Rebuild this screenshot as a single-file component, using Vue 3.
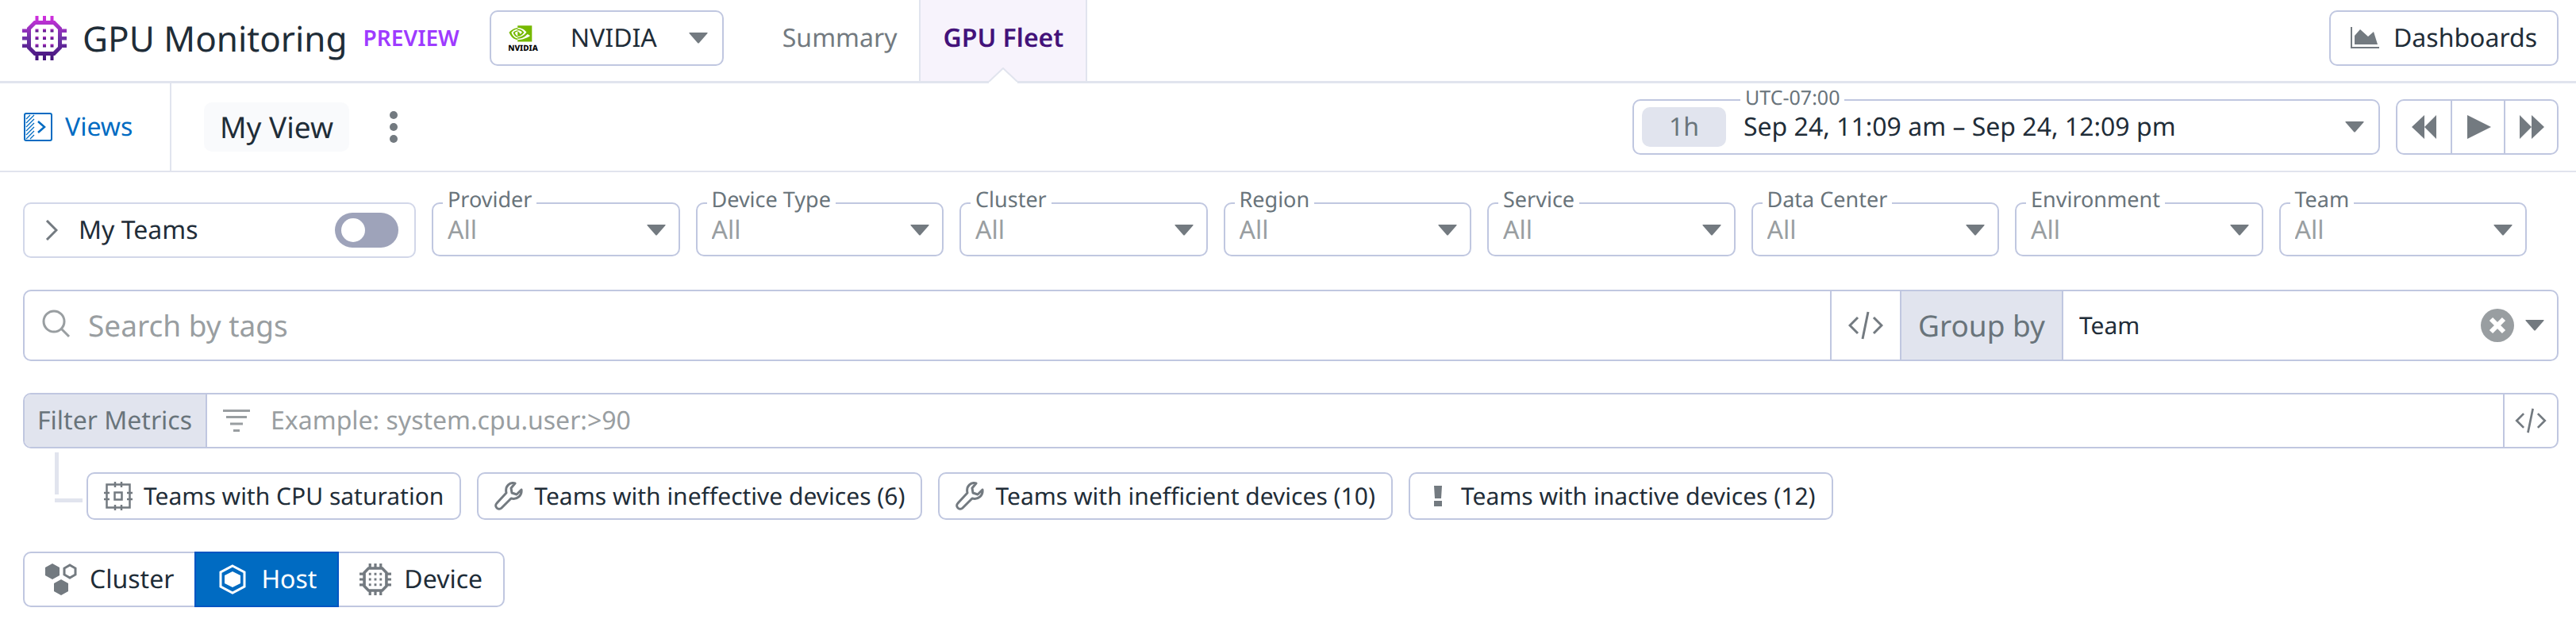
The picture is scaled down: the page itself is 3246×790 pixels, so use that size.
<script setup>
import { ref } from 'vue'

const tabs = [
  { name: 'Summary', active: false },
  { name: 'GPU Fleet', active: true },
]
const filters = ['Provider', 'Device Type', 'Cluster', 'Region', 'Service', 'Data Center', 'Environment', 'Team']
const chips = [
  { icon: 'cpu', text: 'Teams with CPU saturation' },
  { icon: 'wrench', text: 'Teams with ineffective devices (6)' },
  { icon: 'wrench', text: 'Teams with inefficient devices (10)' },
  { icon: 'alert', text: 'Teams with inactive devices (12)' },
]
const levels = ['Cluster', 'Host', 'Device']
const cores = [16.5, 26, 35.5]
const level = ref('Host')
const myTeams = ref(false)
const query = ref('')
const metricQuery = ref('')
</script>

<template>
  <div class="page">
    <svg class="defs" aria-hidden="true">
      <defs>
        <linearGradient id="brand" x1="0" y1="0" x2="0" y2="56" gradientUnits="userSpaceOnUse">
          <stop offset="0" stop-color="#d42fe0" />
          <stop offset="0.5" stop-color="#6f32a8" />
          <stop offset="1" stop-color="#43127a" />
        </linearGradient>
        <linearGradient id="core" x1="0" y1="0" x2="0" y2="1">
          <stop offset="0" stop-color="#b52fc8" />
          <stop offset="1" stop-color="#43127a" />
        </linearGradient>
        <symbol id="gpu" viewBox="0 0 56 56">
          <path d="M16 8.500H40L47.500 16V40L40 47.500H16L8.500 40V16Z" fill="none" stroke="currentColor" stroke-width="5" />
          <path d="M18.500 0V7M28 0V7M37.500 0V7M18.500 49V56M28 49V56M37.500 49V56M0 18.500H7M0 28H7M0 37.500H7M49 18.500H56M49 28H56M49 37.500H56" stroke="currentColor" stroke-width="4.500" />
          <path d="M16.500 18.500h4M26 18.500h4M35.500 18.500h4M16.500 28h4M26 28h4M35.500 28h4M16.500 37.500h4M26 37.500h4M35.500 37.500h4" stroke="currentColor" stroke-width="4" />
        </symbol>
        <symbol id="code" viewBox="0 0 44 36">
          <path d="M12 8L2 18l10 10M32 8l10 10-10 10M25 1l-7 34" fill="none" stroke="currentColor" stroke-width="3" />
        </symbol>
        <symbol id="caret" viewBox="0 0 24 14">
          <path d="M1 0H23q1 0 .5 1L13 13q-1 1-2 0L.5 1Q0 0 1 0Z" fill="currentColor" />
        </symbol>
      </defs>
    </svg>

    <header class="topbar">
      <svg class="logo" viewBox="0 0 56 56" aria-hidden="true">
        <path d="M16 8.500H40L47.500 16V40L40 47.500H16L8.500 40V16Z" fill="none" stroke="url(#brand)" stroke-width="5" />
        <path d="M16.500 0h4v7h-4zM26 0h4v7h-4zM35.500 0h4v7h-4zM16.500 49h4v7h-4zM26 49h4v7h-4zM35.500 49h4v7h-4zM0 16.500h7v4.500H0zM0 26h7v4.500H0zM0 35.500h7v4.500H0zM49 16.500h7v4.500h-7zM49 26h7v4.500h-7zM49 35.500h7v4.500h-7z" fill="url(#brand)" />
        <template v-for="y in cores" :key="y">
          <rect v-for="x in cores" :key="x" :x="x" :y="y" width="4" height="4" fill="url(#core)" />
        </template>
      </svg>
      <h1>GPU Monitoring</h1>
      <span class="preview">PREVIEW</span>
      <div class="vendor">
        <svg class="vendor-logo" viewBox="0 0 40 36" aria-hidden="true">
          <path transform="translate(2.500 -3) scale(1.200 1.280)" fill="#76b900" d="M8.948 8.798v-1.430a6.700 6.700 0 0 1 .424-.018c3.922-.124 6.493 3.374 6.493 3.374s-2.774 3.851-5.750 3.851c-.398 0-.787-.062-1.158-.185v-4.346c1.528.185 1.837.857 2.747 2.385l2.040-1.714s-1.492-1.952-4-1.952a6.016 6.016 0 0 0-.796.035m0-4.735v2.138l.424-.027c5.450-.185 9.010 4.470 9.010 4.470s-4.080 4.964-8.330 4.964c-.370 0-.733-.035-1.095-.097v1.325c.300.035.610.062.910.062 3.957 0 6.820-2.023 9.593-4.408.459.371 2.340 1.263 2.730 1.652-2.633 2.208-8.772 3.984-12.253 3.984-.335 0-.653-.018-.971-.053v1.864H24V4.063zm0 10.326v1.131c-3.657-.654-4.673-4.460-4.673-4.460s1.758-1.944 4.673-2.262v1.237H8.940c-1.528-.186-2.730 1.245-2.730 1.245s.680 2.412 2.739 3.110M2.456 10.900s2.164-3.197 6.500-3.533V6.201C4.153 6.590 0 10.653 0 10.653s2.350 6.802 8.948 7.420v-1.237c-4.840-.600-6.492-5.936-6.492-5.936z" />
          <text x="20" y="34" font-size="10" font-weight="800" text-anchor="middle">NVIDIA</text>
        </svg>
        <select aria-label="Vendor"><option>NVIDIA</option></select>
        <svg class="caret" aria-hidden="true"><use href="#caret" /></svg>
      </div>
      <nav class="tabs">
        <a v-for="t in tabs" :key="t.name" href="#" class="tab" :class="{ active: t.active }">
          {{ t.name }}
          <svg v-if="t.active" class="notch" viewBox="0 0 38 20" aria-hidden="true">
            <path d="M1 18L19 1L37 18V20H1Z" fill="#fff" />
            <path d="M1 18L19 1L37 18" fill="none" stroke="#e1e4ee" stroke-width="2" />
          </svg>
        </a>
      </nav>
      <button class="outlined dashboards">
        <svg viewBox="0 0 36 28" aria-hidden="true">
          <path d="M1 0V26H36" fill="none" stroke="#737a80" stroke-width="2" />
          <path d="M5 22V11L12 3l10 9 7-6 5 16Z" fill="#737a80" />
        </svg>
        Dashboards
      </button>
    </header>

    <div class="viewbar">
      <button class="views">
        <svg viewBox="0 0 36 36" aria-hidden="true">
          <rect x="1" y="1" width="34" height="34" rx="2" fill="none" stroke="currentColor" stroke-width="2" />
          <path d="M3 8l5-5M3 13L13 3M3 18L13 8M3 23l10-10M3 28l10-10M3 33l10-10M8 33l5-5" stroke="currentColor" stroke-width="1.300" />
          <path d="M18 11l8 7-8 7" fill="none" stroke="currentColor" stroke-width="2.500" />
        </svg>
        Views
      </button>
      <button class="view-name">My View</button>
      <button class="more" aria-label="More options">
        <svg viewBox="0 0 10 40" aria-hidden="true">
          <circle cx="5" cy="5" r="5" /><circle cx="5" cy="20" r="5" /><circle cx="5" cy="35" r="5" />
        </svg>
      </button>
      <div class="time">
        <span class="float-label">UTC-07:00</span>
        <button class="time-button">
          <span class="span">1h</span>
          <span class="range">Sep 24, 11:09 am – Sep 24, 12:09 pm</span>
          <svg class="caret" aria-hidden="true"><use href="#caret" /></svg>
        </button>
      </div>
      <div class="playback">
        <button aria-label="Back"><svg viewBox="0 0 32 30" aria-hidden="true"><path d="M16 0V30L0 15ZM31 0V30L16 15Z" /></svg></button>
        <button aria-label="Play"><svg viewBox="0 0 32 30" aria-hidden="true"><path d="M2 0V30L32 15Z" /></svg></button>
        <button aria-label="Forward"><svg viewBox="0 0 32 30" aria-hidden="true"><path d="M1 0V30L16 15ZM16 0V30L32 15Z" /></svg></button>
      </div>
    </div>

    <main>
      <div class="filters">
        <div class="teams">
          <svg class="chevron" viewBox="0 0 16 26" aria-hidden="true"><path d="M2 1l12 12L2 25" fill="none" stroke="#737a80" stroke-width="3" /></svg>
          <label for="my-teams">My Teams</label>
          <input id="my-teams" v-model="myTeams" type="checkbox" class="toggle" />
        </div>
        <div v-for="(f, i) in filters" :key="f" class="filter">
          <label class="float-label" :for="'filter-' + i">{{ f }}</label>
          <select :id="'filter-' + i"><option>All</option></select>
          <svg class="caret" aria-hidden="true"><use href="#caret" /></svg>
        </div>
      </div>

      <div class="search">
        <div class="search-box">
          <svg class="glass" viewBox="0 0 36 40" aria-hidden="true"><circle cx="15" cy="15" r="13" fill="none" stroke="#999ea1" stroke-width="3" /><path d="M24 24l10 10" stroke="#999ea1" stroke-width="3" /></svg>
          <input v-model="query" type="text" placeholder="Search by tags" aria-label="Search by tags" />
        </div>
        <button class="code" aria-label="Edit search as code"><svg aria-hidden="true"><use href="#code" /></svg></button>
        <label class="group-label" for="group-by">Group by</label>
        <div class="group">
          <select id="group-by"><option>Team</option></select>
          <button class="clear" aria-label="Clear">
            <svg viewBox="0 0 42 42" aria-hidden="true"><circle cx="21" cy="21" r="21" fill="#999ea1" /><path d="M13 13l16 16M29 13L13 29" stroke="#fff" stroke-width="6" /></svg>
          </button>
          <svg class="caret" aria-hidden="true"><use href="#caret" /></svg>
        </div>
      </div>

      <div class="metrics">
        <label for="metrics">Filter Metrics</label>
        <div class="metrics-box">
          <svg viewBox="0 0 34 28" aria-hidden="true"><path d="M0 1.500H34M4 9.500H30M9 18H25M13 26.500H21" stroke="#999ea1" stroke-width="3" /></svg>
          <input id="metrics" v-model="metricQuery" type="text" placeholder="Example: system.cpu.user:&gt;90" />
        </div>
        <button class="code" aria-label="Edit filter as code"><svg aria-hidden="true"><use href="#code" /></svg></button>
      </div>

      <div class="suggestions">
        <span class="branch" aria-hidden="true"><i class="stem"></i><i class="twig"></i></span>
        <button v-for="c in chips" :key="c.text" class="chip">
          <svg v-if="c.icon === 'cpu'" viewBox="0 0 36 36" aria-hidden="true">
            <path d="M3.500 3.500h29v29h-29zM13.500 13.500h9v9h-9z" fill="none" stroke="#737a80" stroke-width="2.500" />
            <path d="M14 0v7M22 0v7M14 29v7M22 29v7M0 14h7M0 22h7M29 14h7M29 22h7" stroke="#737a80" stroke-width="2.500" />
          </svg>
          <svg v-else-if="c.icon === 'wrench'" viewBox="0 0 36 36" aria-hidden="true">
            <path d="M26 2C20 0 13 5 15 14L3 27c-4 4 2 10 6 6L21 21c8 2 14-4 13-11l-6 6-6-2-1-6Z" fill="none" stroke="#737a80" stroke-width="3" stroke-linejoin="round" />
          </svg>
          <svg v-else class="narrow" viewBox="0 0 30 36" aria-hidden="true"><path d="M10 5h10l-1 16h-8zM10 24h10v7H10z" fill="#737a80" /></svg>
          {{ c.text }}
        </button>
      </div>

      <div class="levels" role="group" aria-label="Group level">
        <button v-for="l in levels" :key="l" :class="{ on: l === level }" :aria-pressed="l === level" @click="level = l">
          <svg v-if="l === 'Cluster'" viewBox="0 0 40 40" aria-hidden="true">
            <path d="M9 0l9 5v10l-9 5-9-5V5zM20 20l9 5v10l-9 5-9-5V25z" fill="currentColor" />
            <path d="M31 2l7 4v8l-7 4-7-4V6z" fill="none" stroke="currentColor" stroke-width="3" />
          </svg>
          <svg v-else-if="l === 'Host'" viewBox="0 0 40 40" aria-hidden="true">
            <path d="M20 3l15 8v18l-15 8-15-8V11z" fill="none" stroke="currentColor" stroke-width="3" />
            <path d="M20 10l10 5v10l-10 5-10-5V15z" fill="currentColor" />
          </svg>
          <svg v-else aria-hidden="true"><use href="#gpu" /></svg>
          {{ l }}
        </button>
      </div>
    </main>
  </div>
</template>

<style>
body {
  margin: 0;
  background: #fff;
}
</style>

<style scoped>
.page {
  font-family: "Noto Sans", sans-serif;
  font-size: 32px;
  line-height: 44px;
  color: #1f2d38;
  text-rendering: geometricPrecision;
}
.page * {
  box-sizing: border-box;
}
.defs {
  position: absolute;
  width: 0;
  height: 0;
}
svg {
  flex: none;
}
button,
input,
select {
  font: inherit;
  color: inherit;
  text-rendering: inherit;
  margin: 0;
  padding: 0;
  border: 0;
  background: none;
  outline: 0;
}
select {
  appearance: none;
}
button {
  display: flex;
  align-items: center;
  white-space: nowrap;
}
.caret {
  width: 24px;
  height: 14px;
  color: #737a80;
  pointer-events: none;
}

.topbar {
  display: flex;
  align-items: center;
  height: 105px;
  padding: 0 22px 6px 28px;
  border-bottom: 3px solid #e1e4ee;
}
.logo {
  width: 56px;
  height: 56px;
}
h1 {
  margin: 0 0 0 20px;
  font-size: 44px;
  line-height: 60px;
  font-weight: 400;
}
.preview {
  margin-left: 20px;
  font-size: 28px;
  font-weight: 600;
  color: #9e3bff;
}
.vendor {
  display: flex;
  align-items: center;
  width: 295px;
  height: 70px;
  margin-left: 38px;
  padding: 0 18px 0 20px;
  border: 2px solid #c0c7e0;
  border-radius: 10px;
}
.vendor-logo {
  width: 40px;
  height: 36px;
}
.vendor-logo text {
  fill: #000;
}
.vendor select {
  flex: 1;
  padding-left: 40px;
}
.tabs {
  display: flex;
  align-self: stretch;
  margin: 0 0 -6px 46px;
}
.tab {
  position: relative;
  display: flex;
  align-items: center;
  padding: 0 28px 6px;
  color: #737a80;
  text-decoration: none;
}
.tab.active {
  border: 2px solid #e1e4ee;
  border-width: 0 2px;
  background: #f7f3fc;
  color: #43127a;
  font-weight: 600;
}
.notch {
  position: absolute;
  bottom: -3px;
  left: calc(50% - 19px);
  width: 38px;
  height: 20px;
}
.outlined {
  height: 70px;
  border: 2px solid #c0c7e0;
  border-radius: 10px;
}
.dashboards {
  gap: 18px;
  margin-left: auto;
  padding: 0 25px;
}
.dashboards svg {
  width: 36px;
  height: 28px;
}

.viewbar {
  display: flex;
  align-items: center;
  height: 112px;
  padding-right: 22px;
  border-bottom: 2px solid #e1e4ee;
}
.views {
  align-self: stretch;
  gap: 16px;
  width: 216px;
  padding-left: 30px;
  border-right: 2px solid #e1e4ee;
  color: #006bc2;
}
.views svg {
  width: 36px;
  height: 36px;
}
.view-name {
  height: 62px;
  margin-left: 41px;
  padding: 0 20px;
  border-radius: 10px;
  background: #f9fafc;
  font-size: 37px;
}
.more {
  margin-left: 41px;
  padding: 0 10px;
}
.more svg {
  width: 10px;
  height: 40px;
  fill: #737a80;
}
.time {
  position: relative;
  flex: 0 0 942px;
  margin-left: auto;
}
.time-button {
  width: 100%;
  height: 70px;
  padding: 0 18px 0 10px;
  border: 2px solid #c0c7e0;
  border-radius: 10px;
}
.span {
  width: 106px;
  height: 50px;
  border-radius: 10px;
  background: #e1e4ee;
  color: #69747b;
  line-height: 50px;
}
.range {
  flex: 1;
  padding-left: 22px;
  text-align: left;
}
.float-label {
  position: absolute;
  top: -24px;
  left: 12px;
  padding: 0 6px;
  background: #fff;
  color: #69747b;
  font-size: 27px;
  line-height: 36px;
}
.time .float-label {
  top: -20px;
  left: 136px;
  font-size: 25px;
}
.playback {
  display: flex;
  height: 70px;
  margin-left: 20px;
  border: 2px solid #c0c7e0;
  border-radius: 10px;
}
.playback button {
  justify-content: center;
  width: 67px;
}
.playback button + button {
  border-left: 2px solid #c0c7e0;
}
.playback svg {
  width: 32px;
  height: 30px;
  fill: #737a80;
}

main {
  padding: 38px 22px 25px 29px;
}
.filters {
  display: flex;
  align-items: flex-start;
  gap: 20px;
  padding-right: 40px;
}
.teams {
  display: flex;
  align-items: center;
  width: 495px;
  height: 70px;
  padding: 0 20px 0 26px;
  border: 2px solid #d2d7e9;
  border-radius: 10px;
}
.chevron {
  width: 16px;
  height: 26px;
}
.teams label {
  flex: 1;
  margin-left: 26px;
}
.toggle {
  appearance: none;
  display: flex;
  align-items: center;
  width: 80px;
  height: 44px;
  padding: 0 8px;
  border-radius: 22px;
  background: #9ea3ba;
}
.toggle::before {
  content: "";
  width: 30px;
  height: 30px;
  border-radius: 50%;
  background: #fff;
}
.toggle:checked {
  justify-content: flex-end;
  background: #006bc2;
}
.filter {
  position: relative;
  display: flex;
  flex: 1;
  align-items: center;
  height: 68px;
  padding: 2px 16px 0 18px;
  border: 2px solid #c0c7e0;
  border-radius: 10px;
}
.filter select {
  flex: 1;
  color: #999ea1;
}

.search {
  display: flex;
  height: 90px;
  margin-top: 40px;
  border: 2px solid #c0c7e0;
  border-radius: 10px;
  font-size: 37px;
  line-height: 60px;
}
.search-box,
.metrics-box {
  display: flex;
  flex: 1;
  align-items: center;
}
.search-box {
  gap: 22px;
  padding-left: 22px;
}
.glass {
  width: 36px;
  height: 40px;
}
.search-box input,
.metrics-box input {
  flex: 1;
}
.search-box input {
  height: 60px;
}
input::placeholder {
  color: #999ea1;
  opacity: 1;
}
.code {
  justify-content: center;
  border-left: 2px solid #c0c7e0;
  color: #737a80;
}
.search .code {
  width: 88px;
}
.search .code svg {
  width: 44px;
  height: 36px;
}
.group-label {
  display: flex;
  align-items: center;
  padding: 0 21px;
  border: 2px solid #c0c7e0;
  border-width: 0 2px;
  background: #e1e4ee;
  color: #69747b;
}
.group {
  display: flex;
  flex: 0 0 622px;
  align-items: center;
  padding: 0 16px 0 20px;
  font-size: 30px;
}
.group select {
  flex: 1;
}
.clear {
  margin-right: 14px;
}
.clear svg {
  width: 42px;
  height: 42px;
}

.metrics {
  display: flex;
  height: 70px;
  margin-top: 40px;
  border: 2px solid #c0c7e0;
  border-radius: 10px;
}
.metrics label {
  display: flex;
  align-items: center;
  padding: 0 17px 0 16px;
  border-right: 2px solid #c0c7e0;
  border-radius: 8px 0 0 8px;
  background: #e1e4ee;
  color: #69747b;
}
.metrics-box {
  gap: 26px;
  padding-left: 20px;
}
.metrics-box svg {
  width: 34px;
  height: 28px;
}
.metrics .code {
  width: 68px;
}
.metrics .code svg {
  width: 40px;
  height: 32px;
}

.suggestions {
  display: flex;
  gap: 20px;
  margin-top: 30px;
}
.branch {
  display: flex;
  flex-direction: column;
  gap: 5px;
  width: 35px;
  height: 63px;
  margin: -25px -15px 0 40px;
}
.stem {
  width: 5px;
  height: 53px;
  background: #e1e4ee;
}
.twig {
  height: 5px;
  background: #e1e4ee;
}
.chip {
  gap: 14px;
  height: 60px;
  padding: 0 20px;
  border: 2px solid #c0c7e0;
  border-radius: 10px;
  font-size: 30px;
}
.chip svg {
  width: 36px;
  height: 36px;
}
.chip .narrow {
  width: 30px;
}

.levels {
  display: flex;
  width: max-content;
  height: 70px;
  margin-top: 40px;
  border: 2px solid #c0c7e0;
  border-radius: 10px;
}
.levels button {
  gap: 16px;
  padding: 0 26px;
}
.levels svg {
  width: 40px;
  height: 40px;
  color: #737a80;
}
.levels .on {
  margin: -2px 0;
  border: 2px solid #0055c2;
  background: #006bc2;
  color: #fff;
}
.levels .on svg {
  color: #fff;
}
</style>
